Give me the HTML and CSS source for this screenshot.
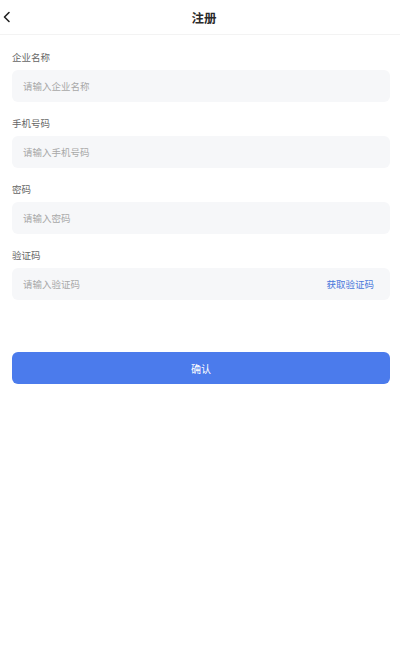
FILE: index.html
```html
<!DOCTYPE html>
<html lang="zh-CN">
<head>
    <meta charset="UTF-8">
    <meta name="viewport" content="width=device-width, initial-scale=1.0">
    <title>注册</title>
    <link rel="stylesheet" href="styles.css">
</head>
<body>
    <div class="header">
        <span class="back">
            <svg width="10" height="12" viewBox="0 0 10 12"><path d="M7 1.5 L2.5 6 L7 10.5" fill="none" stroke="#222" stroke-width="1.6" stroke-linecap="round" stroke-linejoin="round"/></svg>
        </span>
        <div class="title">注册</div>
    </div>

    <div class="form">
        <div class="field">
            <div class="label">企业名称</div>
            <div class="input"><span class="placeholder">请输入企业名称</span></div>
        </div>
        <div class="field">
            <div class="label">手机号码</div>
            <div class="input"><span class="placeholder">请输入手机号码</span></div>
        </div>
        <div class="field">
            <div class="label">密码</div>
            <div class="input"><span class="placeholder">请输入密码</span></div>
        </div>
        <div class="field">
            <div class="label">验证码</div>
            <div class="input">
                <span class="placeholder">请输入验证码</span>
                <span class="code-btn">获取验证码</span>
            </div>
        </div>

        <button class="submit">确认</button>
    </div>
</body>
</html>
```

FILE: styles.css
```css
body {
    margin: 0;
    font-family: "Noto Sans CJK SC", "Noto Sans", sans-serif;
    background: #fff;
    color: #333;
}
.header {
    position: relative;
    height: 34px;
    border-bottom: 1px solid #f3f3f3;
    display: flex;
    align-items: center;
    justify-content: center;
    padding-left: 8px;
}
.back {
    position: absolute;
    left: 2px;
    top: 11px;
    display: flex;
}
.title {
    font-size: 12.5px;
    font-weight: bold;
    color: #2a2a2a;
}
.form {
    padding: 15px 10px 0 12px;
}
.field {
    margin-bottom: 14px;
}
.label {
    font-size: 9.5px;
    line-height: 14px;
    color: #666;
    margin-bottom: 6px;
}
.input {
    height: 32px;
    background: #f6f7f9;
    border-radius: 6px;
    padding: 0 16px 0 11px;
    display: flex;
    align-items: center;
    justify-content: space-between;
}
.placeholder {
    font-size: 9.5px;
    color: #a8a8a8;
}
.code-btn {
    font-size: 9.5px;
    color: #4a78dc;
}
.submit {
    display: block;
    width: 100%;
    height: 32px;
    margin-top: 52px;
    border: none;
    border-radius: 6px;
    background: #4b7bec;
    color: #fff;
    font-family: inherit;
    font-size: 10px;
}
```
